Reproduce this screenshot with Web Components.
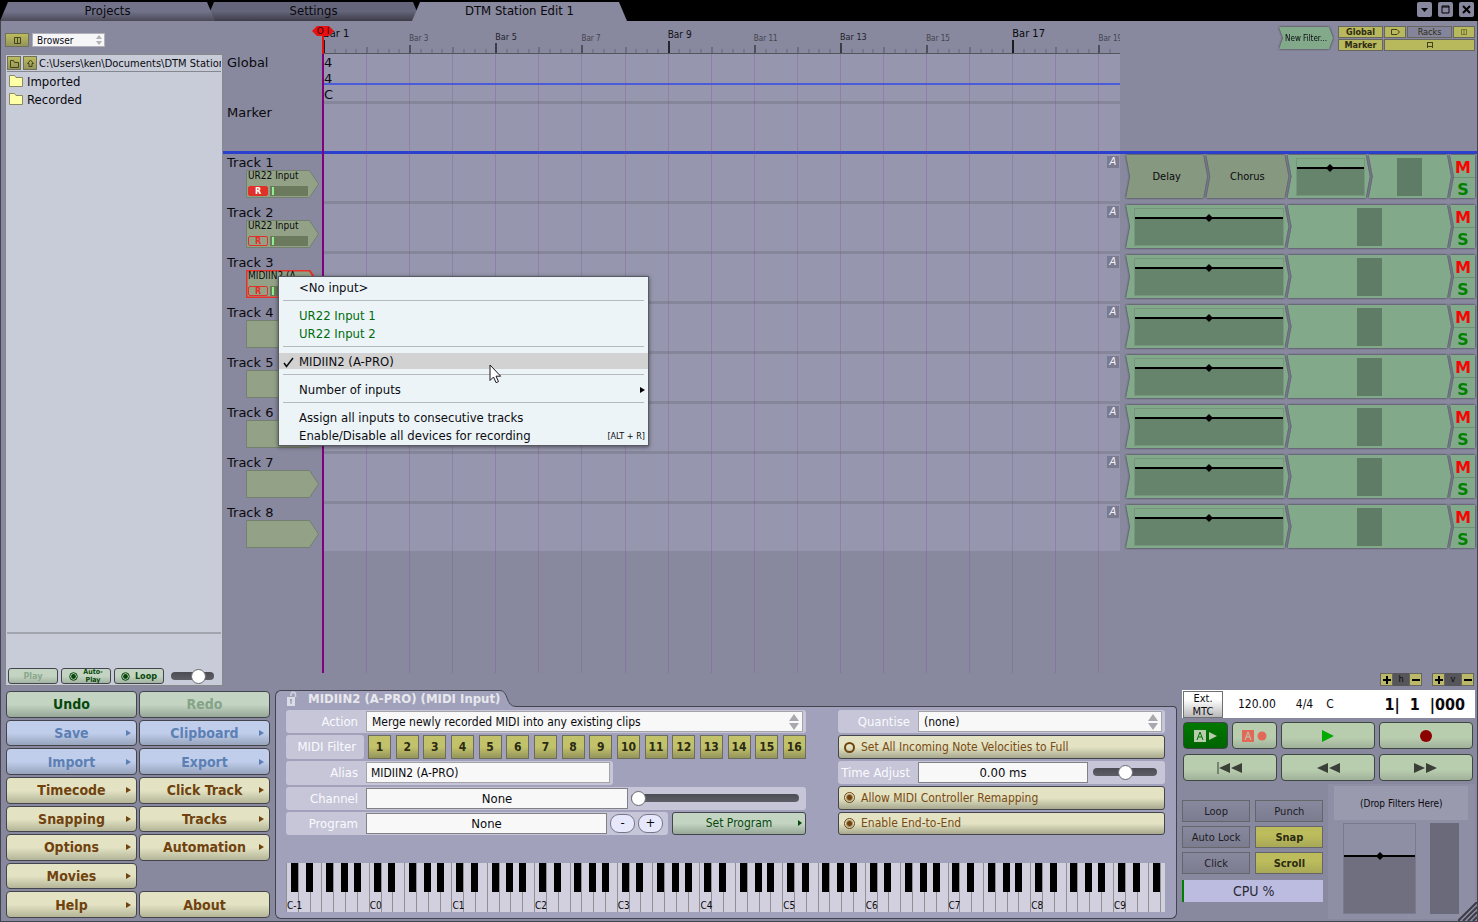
<!DOCTYPE html>
<html lang="en">
<head>
<meta charset="utf-8">
<title>DTM Station Edit 1</title>
<style>
    html, body { margin: 0; height: 100%; }
    body {
        background: #88889e;
        color: #0a0a0e;
        font-family: "DejaVu Sans Condensed", "DejaVu Sans", sans-serif;
        font-size: 13px;
        overflow: hidden;
    }
</style>
</head>
<body>
<station-app></station-app>
<script>
// rules every shadow root starts with
const base = `
    *, *::before, *::after { box-sizing: border-box; }
    :host { box-sizing: border-box; }
    :host([hidden]) { display: none; }
    button, input, select { font: inherit; color: inherit; margin: 0; padding: 0; border: 0; border-radius: 0; background: none; }
    svg { display: block; }
`

// the round-ended slider is used in four places
const sliderCss = `
    input[type=range] { appearance: none; height: 8px; border-radius: 4px; background: linear-gradient(#4c4d54, #5e5f66); }
    input[type=range]::-webkit-slider-thumb { appearance: none; width: 15px; height: 15px; border-radius: 50%; background: white; border: 1px solid #6a6a70; }
`

class BaseElement extends HTMLElement {
    connectedCallback() {
        if (this.shadowRoot) return
        this.attachShadow({mode: 'open'})
        const template = document.createElement('template')
        template.innerHTML = '<style>' + base + '</style>' + this.render()
        this.shadowRoot.appendChild(template.content.cloneNode(true))
    }
    attr(name, fallback = '') {
        return this.hasAttribute(name) ? this.getAttribute(name) : fallback
    }
}

/* ---------- whole window ---------- */

class StationApp extends BaseElement {
    render() {
        return `<style>
            :host { display: flex; flex-direction: column; height: 100vh; position: relative; }
            .frame { flex: 1; min-height: 0; display: flex; flex-direction: column; border: 1px solid #44444f; border-top: 0; }
            .main { flex: 1; min-height: 0; display: flex; }
            .bottom { display: flex; gap: 5px; padding: 4px 2px 2px 5px; }
            track-arranger, input-inspector { flex: 1; min-width: 0; }
            input-menu { position: absolute; left: 278px; top: 276px; z-index: 5; }
            .cursor { position: absolute; left: 489px; top: 364px; z-index: 6; }
            .grip { position: absolute; right: 1px; bottom: 1px; }
        </style>
        <title-tabs></title-tabs>
        <div class="frame">
            <div class="main">
                <file-browser></file-browser>
                <track-arranger></track-arranger>
            </div>
            <div class="bottom">
                <command-grid></command-grid>
                <input-inspector></input-inspector>
                <transport-panel></transport-panel>
            </div>
        </div>
        <input-menu></input-menu>
        <svg class="cursor" width="13" height="20"><path d="M1 1v15.500l3.500-3.500 2.600 5.700 2.400-1.100-2.500-5.400h4.700z" fill="#fff" stroke="#16161c"/></svg>
        <svg class="grip" width="19" height="19"><path d="M0 19L19 0M5 19L19 5M10 19L19 10M15 19L19 15" stroke="#3c3c46" stroke-width="2"/></svg>`
    }
}

class TitleTabs extends BaseElement {
    render() {
        return `<style>
            :host { display: flex; height: 21px; padding-top: 2px; background: #000; }
            nav { display: flex; flex: 1; }
            a {
                width: 215px; height: 19px; line-height: 18px; text-align: center;
                color: #08080c; text-decoration: none;
                background: linear-gradient(#72728a 50%, #4a4a58);
                clip-path: polygon(8px 0, calc(100% - 8px) 0, 100% 100%, 0 100%);
                position: relative; z-index: 1;
            }
            a + a { margin-left: -9px; z-index: 0; background: linear-gradient(#64647a 50%, #3c3c48); }
            a.current { background: #88889e; z-index: 2; }
            .window { display: flex; gap: 6px; padding-right: 4px; }
            button { width: 15px; height: 15px; border-radius: 2px; background: #88889e; display: grid; place-items: center; }
        </style>
        <nav>
            <a href="#projects">Projects</a>
            <a href="#settings">Settings</a>
            <a href="#edit" class="current">DTM Station Edit 1</a>
        </nav>
        <div class="window">
            <button aria-label="Minimise"><svg width="9" height="9"><path d="M1 3h7L4.500 7z"/></svg></button>
            <button aria-label="Maximise"><svg width="9" height="9"><path d="M1 1h7v7H1zM1 2h7" fill="none" stroke="#000"/></svg></button>
            <button aria-label="Close"><svg width="9" height="9"><path d="M1 1l7 7m0-7l-7 7" stroke="#000" stroke-width="2"/></svg></button>
        </div>`
    }
}

/* ---------- file browser ---------- */

class FileBrowser extends BaseElement {
    render() {
        const folder = '<svg width="14" height="12"><path d="M.5.5h5l1.500 2h6.500v9H.5z" fill="#ffffa8" stroke="#8a8a60"/></svg>'
        return `<style>
            ${sliderCss}
            :host { display: flex; flex-direction: column; width: 222px; padding-left: 4px; }
            .top { display: flex; gap: 3px; height: 33px; padding-top: 12px; align-items: start; }
            .olive { background: linear-gradient(#bcbc5e, #94945c); border: 1px solid #707058; display: grid; place-items: center; }
            .top .olive { width: 24px; height: 14px; }
            .select { display: grid; align-items: center; width: 73px; height: 14px; background: #f6f6f8; border: 1px solid #b0b0b8; }
            .select > * { grid-area: 1 / 1; }
            select { appearance: none; width: 100%; padding-left: 4px; font-size: 10px; }
            .select svg { justify-self: end; margin-right: 2px; pointer-events: none; }
            .panel { flex: 1; min-height: 0; display: flex; flex-direction: column; background: #c8ccd9; border: 1px solid #88888c; }
            .path { display: flex; gap: 2px; align-items: center; height: 17px; margin: 0 1px; border-bottom: 1px solid #85878e; overflow: hidden; white-space: nowrap; font-size: 11px; }
            .path .olive { flex: none; width: 14px; height: 14px; }
            ul { flex: 1; list-style: none; margin: 0; padding: 0 3px; }
            li { display: flex; align-items: center; gap: 4px; height: 18px; }
            .bar { display: flex; gap: 3px; height: 53px; margin: 0 1px; padding: 34px 1px 1px; border-top: 2px solid #a2a4ae; align-items: end; }
            .bar button { width: 50px; height: 16px; display: flex; align-items: center; justify-content: center; gap: 5px;
                border: 1px solid #44444c; border-radius: 3px; background: linear-gradient(#c4d4c2 50%, #a4b4a4);
                font-size: 9px; font-weight: bold; color: #06480c; }
            .bar button:disabled { color: #8aa88c; }
            .bar .small { font-size: 7px; line-height: 8px; }
            .bar input { width: 43px; margin: 0 0 4px 4px; }
        </style>
        <div class="top">
            <button class="olive" aria-label="Show browser"><svg width="7" height="7"><path d="M.5.5h6v6h-6zM3.500 0v7" fill="none" stroke="#44441c"/></svg></button>
            <div class="select">
                <select aria-label="Panel"><option>Browser</option></select>
                <svg width="6" height="10"><path d="M0 4l3-4 3 4zM0 6l3 4 3-4z" fill="#b0b0b4"/></svg>
            </div>
        </div>
        <div class="panel">
            <div class="path">
                <button class="olive" aria-label="Folder"><svg width="9" height="9"><path d="M.5 1.500h3l1 2h4v5h-8z" fill="none" stroke="#44441c"/></svg></button>
                <button class="olive" aria-label="Up"><svg width="9" height="9"><path d="M4.500 1l3 3.500h-1.500v3h-3v-3h-1.500z" fill="none" stroke="#44441c"/></svg></button>
                <span>C:\\Users\\ken\\Documents\\DTM Station</span>
            </div>
            <ul>
                <li>${folder}Imported</li>
                <li>${folder}Recorded</li>
            </ul>
            <div class="bar">
                <button disabled>Play</button>
                <button class="small"><svg width="9" height="9"><circle cx="4.500" cy="4.500" r="3.800" fill="none" stroke="#06480c"/><circle cx="4.500" cy="4.500" r="2.400" fill="#06480c"/></svg><span>Auto-<br>Play</span></button>
                <button><svg width="9" height="9"><circle cx="4.500" cy="4.500" r="3.800" fill="none" stroke="#06480c"/><circle cx="4.500" cy="4.500" r="2.400" fill="#06480c"/></svg>Loop</button>
                <input type="range" aria-label="Preview volume" value="72">
            </div>
        </div>`
    }
}

/* ---------- arranger ---------- */

// label column, lanes, filter racks: the same three columns on every row
const columns = 'grid-template-columns: 100px minmax(0, 1fr) 357px;'

class TrackArranger extends BaseElement {
    render() {
        const inputs = ['UR22 Input', 'UR22 Input', 'MIDIIN2 (A-']
        let tracks = ''
        for (let index = 0; index < 8; index++) {
            tracks += `<track-row name="Track ${index + 1}" input="${inputs[index] || ''}" ${index == 0 ? 'armed filters="Delay,Chorus"' : ''} ${index == 2 ? 'selected' : ''}></track-row>`
        }
        return `<style>
            :host { display: flex; flex-direction: column; }
            .sheet { flex: 1; min-height: 0; position: relative; overflow: hidden; }
            .row { display: grid; ${columns} }
            .head { height: 33px; }
            .name { padding-left: 4px; line-height: 18px; font-family: "DejaVu Sans", sans-serif; }
            .lane { background: #9696ae; height: 47px; margin-bottom: 3px; box-shadow: 0 3px #86869b; font-family: "DejaVu Sans", sans-serif; line-height: 16px; padding: 1px 0 0 1px; }
            .tempo { background: linear-gradient(#4a5cdc, #4a5cdc) 0 29px / 100% 2px no-repeat #9696ae; }
            .marker { margin-bottom: 0; box-shadow: none; }
            .split { height: 3px; background: #2c40d0; }
            .filters { grid-column: 3; display: flex; justify-content: flex-end; gap: 5px; padding: 5px 2px 0 0; }
            .new { filter: drop-shadow(0 0 1px #333); }
            .new button { width: 54px; height: 22px; margin-top: 1px; font-size: 8px; background: #82aa8a;
                clip-path: polygon(0 0, calc(100% - 4px) 0, 100% 50%, calc(100% - 4px) 100%, 0 100%, 4px 50%); }
            .toggles { display: grid; grid-template: 12px 12px / 45px 22px 45px 22px; gap: 1px; }
            .toggles button { font-size: 9px; line-height: 10px; border: 1px solid #66665e; background: #b8b85c; font-weight: bold; color: #2c2c14; display: grid; place-items: center; }
            .toggles .off { background: #84849a; font-weight: normal; }
            .toggles .wide { grid-column: span 3; }
            .zoom { display: flex; justify-content: flex-end; gap: 10px; height: 13px; padding-right: 3px; }
            .zoom div { display: grid; grid-template-columns: 13px 16px 13px; background: #55555a; font-size: 9px; text-align: center; line-height: 13px; }
            .zoom button { border: 1px solid #66665e; background: #bcb86a; display: grid; place-items: center; }
        </style>
        <div class="sheet">
            <div class="row head">
                <span></span>
                <bar-ruler></bar-ruler>
                <div class="filters">
                    <div class="new"><button>New Filter...</button></div>
                    <div class="toggles">
                        <button>Global</button>
                        <button aria-label="Inputs"><svg width="9" height="6"><path d="M.5.5h5.500l2.500 2.500-2.500 2.500h-5.500z" fill="none" stroke="#44441c"/></svg></button>
                        <button class="off">Racks</button>
                        <button aria-label="Mixer"><svg width="6" height="6"><path d="M.5.5h5v5h-5zM3 0v6" fill="none" stroke="#77773c"/></svg></button>
                        <button>Marker</button>
                        <button class="wide" aria-label="Controls"><svg width="6" height="6"><path d="M.5 0v6M5.500 0v6M1 .5h4M1 4.500h4" stroke="#44441c"/></svg></button>
                    </div>
                </div>
            </div>
            <div class="row"><span class="name">Global</span><div class="lane tempo">4<br>4<br>C</div></div>
            <div class="row"><span class="name">Marker</span><div class="lane marker"></div></div>
            <div class="split"></div>
            ${tracks}
            <bar-lines></bar-lines>
        </div>
        <div class="zoom">
            <div><button aria-label="Zoom in horizontally"><svg width="8" height="8"><path d="M0 4h8M4 0v8" stroke="#000" stroke-width="2"/></svg></button>h<button aria-label="Zoom out horizontally"><svg width="8" height="8"><path d="M0 4h8" stroke="#000" stroke-width="2"/></svg></button></div>
            <div><button aria-label="Zoom in vertically"><svg width="8" height="8"><path d="M0 4h8M4 0v8" stroke="#000" stroke-width="2"/></svg></button>v<button aria-label="Zoom out vertically"><svg width="8" height="8"><path d="M0 4h8" stroke="#000" stroke-width="2"/></svg></button></div>
        </div>`
    }
}

// 18 and a half bars are in view, so the grids count in half bars
class BarRuler extends BaseElement {
    level(bar) {
        if (bar % 16 == 1) return 'l16'
        if (bar % 8 == 1) return 'l8'
        if (bar % 4 == 1) return 'l4'
        return bar % 2 == 1 ? 'l2' : 'l1'
    }
    render() {
        let bars = ''
        for (let bar = 1; bar <= 19; bar++) {
            const beats = bar == 19 ? '<i></i><i></i>' : '<i></i><i></i><i></i><i></i>'
            bars += `<div class="bar ${this.level(bar)} ${bar == 19 ? 'half' : ''}">${beats}<span>${bar % 2 ? 'Bar ' + bar : ''}</span></div>`
        }
        return `<style>
            :host { display: grid; grid-template-columns: repeat(37, minmax(0, 1fr)); align-items: end; overflow: hidden; border-bottom: 1px solid #55555f; }
            .bar { grid-column: span 2; position: relative; display: flex; align-items: end; height: 32px; --tick: 6px; --ink: #6e6e80; }
            .half { grid-column: span 1; }
            i { flex: 1; height: 4px; border-left: 2px solid #78788c; }
            i:first-child { height: var(--tick); border-color: var(--ink); }
            span { position: absolute; left: 0; bottom: calc(var(--tick) + 1px); line-height: 10px; white-space: nowrap; font-size: 8px; color: #44444e; }
            .l2 { --tick: 8px; --ink: #50505c; }
            .l4 { --tick: 10px; --ink: #3c3c46; }
            .l8 { --tick: 12px; --ink: #26262e; }
            .l16 { --tick: 13px; --ink: #1c1c22; }
            .l4 span { font-size: 9px; color: #22222a; }
            .l8 span { font-size: 10px; color: #121218; }
            .l16 span { font-size: 11px; color: #08080c; }
        </style>${bars}`
    }
}

class BarLines extends BaseElement {
    render() {
        return `<style>
            :host { position: absolute; inset: 5px 357px 0 100px; pointer-events: none; }
            .lines { position: absolute; inset: 28px 0 0 0; display: grid; grid-template-columns: repeat(37, minmax(0, 1fr)); }
            .lines i { grid-column: span 2; border-left: 1px solid rgba(128, 70, 150, .28); }
            .lines i:last-child { grid-column: span 1; }
            .head { position: absolute; left: -1px; top: 0; bottom: 0; width: 2px; background: linear-gradient(#e81010 28px, #800080 28px); }
            .flag { position: absolute; left: -11px; top: 0; width: 22px; height: 10px; background: #e81010; color: #300; font: 9px/10px "DejaVu Sans", sans-serif; text-align: center;
                clip-path: polygon(5px 0, calc(100% - 5px) 0, 100% 50%, calc(100% - 5px) 100%, 5px 100%, 0 50%); }
        </style>
        <div class="lines">${'<i></i>'.repeat(19)}</div>
        <div class="head"></div>
        <div class="flag">O I</div>`
    }
}

class TrackRow extends BaseElement {
    render() {
        const input = this.attr('input')
        const filters = this.attr('filters').split(',').filter(name => name)
        return `<style>
            :host { display: grid; ${columns} height: 50px; }
            .name { height: 16px; padding-left: 4px; line-height: 18px; font-family: "DejaVu Sans", sans-serif; }
            .lane { background: #9696ae; height: 47px; box-shadow: 0 3px #86869b; display: flex; justify-content: flex-end; padding: 2px 1px 0; }
            .lane button { width: 12px; height: 12px; background: #7a7a90; color: #f4f4f8; font-size: 11px; line-height: 12px; font-style: italic; }
            :host([name="Track 8"]) .lane { box-shadow: none; }
            .chip { display: grid; margin-left: 23px; width: 73px; height: 28px; }
            .chip > * { grid-area: 1 / 1; }
            .chip path { fill: #93a287; stroke: #74806f; }
            :host([selected]) path { stroke: #e83028; stroke-width: 2; }
            .inside { padding: 0 11px 0 2px; font-size: 10px; line-height: 11px; white-space: nowrap; }
            .meters { display: flex; gap: 2px; margin-top: 5px; height: 10px; }
            .rec { width: 20px; height: 10px; font-size: 9px; line-height: 8px; font-weight: bold; color: #e03028; border: 1px solid #e03028; border-radius: 2px; }
            :host([armed]) .rec { background: #e03028; color: white; }
            .meter { flex: 1; background: linear-gradient(#90f090, #90f090) 2px 1px / 2px 8px no-repeat #6b7a5c; }
            .rack { display: grid; grid-template-columns: repeat(${filters.length + 2}, minmax(0, 1fr)) 24px; height: 43px; margin: 1px 2px 0 6px; filter: drop-shadow(0 0 1px #2c2c34); }
            .rack > * { clip-path: polygon(0 0, calc(100% - 4px) 0, 100% 50%, calc(100% - 4px) 100%, 0 100%, 4px 50%); background: #82a98a; }
            .rack > * + * { margin-left: -1px; }
            .filter { background: #869880; font-size: 11px; }
            .plot { padding: 3px 5px 2px 8px; }
            .fader { padding: 3px 0 2px; display: flex; justify-content: center; }
            .fader::before { content: ""; width: 25px; background: #5f7c66; }
            .rack .ms { display: grid; grid-template-rows: 22px 21px; clip-path: polygon(0 0, 100% 0, 100% 100%, 0 100%, 4px 50%); }
            .ms button { font: bold 16px/18px "DejaVu Sans", sans-serif; color: #f00; padding: 4px 0 0 1px; }
            .ms button + button { color: #008000; border-top: 1px solid #6f9077; padding-top: 3px; }
        </style>
        <div>
            <div class="name">${this.attr('name')}</div>
            <div class="chip">
                <svg width="73" height="28"><path d="M.5.5h63l9 13.500-9 13.500H.5z"/></svg>
                ${input ? `<div class="inside">${input}<div class="meters"><button class="rec">R</button><div class="meter"></div></div></div>` : ''}
            </div>
        </div>
        <div class="lane"><button>A</button></div>
        <div class="rack">
            ${filters.map(name => `<button class="filter">${name}</button>`).join('')}
            <div class="plot"><level-plot></level-plot></div>
            <div class="fader"></div>
            <div class="ms"><button>M</button><button>S</button></div>
        </div>`
    }
}

// volume line with its diamond handle
class LevelPlot extends BaseElement {
    render() {
        return `<style>
            :host { display: grid; height: 100%; grid-template-rows: var(--plot-top, 8px) 1fr; border: 1px solid var(--plot-edge, #76967d); }
            .low { background: var(--plot-fill, #66846c); border-top: 2px solid #000; }
            svg { margin: -5px auto 0; position: relative; }
        </style>
        <div></div>
        <div class="low"><svg width="6" height="8"><path d="M3 0l3 3v2l-3 3-3-3v-2z"/></svg></div>`
    }
}

/* ---------- context menu ---------- */

class InputMenu extends BaseElement {
    render() {
        return `<style>
            :host { width: 371px; padding: 2px 0 0; background: #ecf4f8; border: 1px solid #5a5a62; box-shadow: 0 1px 4px rgba(0, 0, 0, .5); }
            button { display: flex; align-items: center; width: 100%; height: 16px; margin-bottom: 2px; line-height: 16px; padding: 2px 3px 0 0; text-align: left; color: #0c0c10; }
            .tick { flex: none; width: 20px; padding-left: 4px; }
            .text { flex: 1; }
            .green { color: #006c0c; }
            .over { background: #d2d2d2; }
            kbd { font: inherit; font-size: 9px; }
            hr { height: 1px; margin: 5px 4px 6px; border: 0; background: #b4babe; }
        </style>
        <button><span class="tick"></span><span class="text">&lt;No input&gt;</span></button>
        <hr>
        <button class="green"><span class="tick"></span><span class="text">UR22 Input 1</span></button>
        <button class="green"><span class="tick"></span><span class="text">UR22 Input 2</span></button>
        <hr>
        <button class="over"><span class="tick"><svg width="11" height="11"><path d="M1 6l2.500 3.500L10 1" fill="none" stroke="#0c0c10" stroke-width="1.500"/></svg></span><span class="text">MIDIIN2 (A-PRO)</span></button>
        <hr>
        <button><span class="tick"></span><span class="text">Number of inputs</span><svg width="5" height="6"><path d="M0 0l5 3-5 3z"/></svg></button>
        <hr>
        <button><span class="tick"></span><span class="text">Assign all inputs to consecutive tracks</span></button>
        <button><span class="tick"></span><span class="text">Enable/Disable all devices for recording</span><kbd>[ALT + R]</kbd></button>`
    }
}

/* ---------- command buttons ---------- */

class CommandGrid extends BaseElement {
    render() {
        const commands = [
            ['Undo', 'green'], ['Redo', 'green dim'],
            ['Save', 'blue menu'], ['Clipboard', 'blue menu'],
            ['Import', 'blue menu'], ['Export', 'blue menu'],
            ['Timecode', 'menu'], ['Click Track', 'menu'],
            ['Snapping', 'menu'], ['Tracks', 'menu'],
            ['Options', 'menu'], ['Automation', 'menu'],
            ['Movies', 'menu'], null,
            ['Help', 'menu'], ['About', '']
        ]
        let html = ''
        for (const command of commands) {
            html += command
                ? `<button class="${command[1]}"><span>${command[0]}</span>${command[1].includes('menu') ? '<svg width="5" height="6"><path d="M0 0l5 3-5 3z" fill="currentColor"/></svg>' : ''}</button>`
                : '<div></div>'
        }
        return `<style>
            :host { display: grid; grid-template-columns: 1fr 1fr; grid-auto-rows: 1fr; gap: 2px; width: 264px; padding: 1px 0; }
            button { display: grid; grid-template-columns: 9px 1fr 9px; align-items: center; justify-items: center; padding: 0 3px; min-height: 0;
                font-size: 14px; font-weight: bold; color: #70420e; border: 1px solid #44444c; border-radius: 4px;
                background: linear-gradient(#e3e3c4 50%, #b4b498); }
            span { grid-column: 2; }
            .green { color: #04480c; background: linear-gradient(#c4d4c2 50%, #98a898); }
            .dim { color: #84a488; }
            .blue { color: #5c80b4; background: linear-gradient(#c0ceec 50%, #98a4bc); }
        </style>${html}`
    }
}

/* ---------- inspector ---------- */

class InputInspector extends BaseElement {
    render() {
        let channels = ''
        for (let index = 1; index <= 16; index++) {
            channels += `<button>${index}</button>`
        }
        return `<style>
            :host { display: flex; flex-direction: column; --line: #44444f; --fill: #a1a1bc; }
            .head { display: flex; height: 20px; }
            .tab { display: flex; align-items: center; gap: 11px; padding: 0 0 4px 11px; border: solid var(--line); border-width: 1px 0 0 1px; border-radius: 6px 0 0 0; background: var(--fill); color: #e8e8ec; font-weight: bold; }
            .edge { flex: none; }
            .rest { flex: 1; align-self: end; height: 4px; border: solid var(--line); border-width: 1px 1px 0 0; border-radius: 0 4px 0 0; background: var(--fill); }
            .body { flex: 1; padding: 0 11px 6px 10px; background: var(--fill); border: solid var(--line); border-width: 0 1px 1px; border-radius: 0 0 6px 6px; display: flex; flex-direction: column; gap: 28px; }
            .forms { display: grid; grid-template-columns: minmax(0, 520fr) minmax(0, 327fr); gap: 32px; }
            .form { display: grid; grid-auto-rows: 1fr; gap: 2px; height: 125px; }
            .line { display: flex; gap: 4px; min-width: 0; }
            .channels { flex: 1; display: flex; justify-content: space-between; }
            .channels button { width: 23px; border: 1px solid #6c6c5c; background: linear-gradient(#c2c26a 50%, #94945c); font-size: 12px; font-weight: bold; color: #2c2c14; }
            .caption { width: 78px; padding-right: 8px; border-radius: 3px; background: #c6c6d8; color: #fafafe; text-align: right; line-height: 24px; }
            .set { width: 134px; display: grid; grid-template-columns: 9px 1fr 9px; align-items: center; justify-items: center; padding: 0 1px; font-size: 12px; color: #06480c; border: 1px solid #44444c; border-radius: 3px; background: linear-gradient(#c4d4c2 50%, #98a898); }
            .set span { grid-column: 2; }
            .grow { flex: 1; }
            .alias { width: 327px; }
        </style>
        <div class="head">
            <div class="tab">
                <svg width="10" height="15"><path d="M4 5V3.500a2 2 0 0 1 4.500 0V6" fill="none" stroke="#d4d4e0" stroke-width="1.500"/><rect y="6" width="8" height="9" fill="#dcdce4"/><path d="M4 8v5M3 9h2" stroke="#8c8ca4"/></svg>
                <span>MIDIIN2 (A-PRO) (MIDI Input)</span>
            </div>
            <svg class="edge" width="16" height="20"><path d="M0 0c9 0 5 16 16 16v4H0z" fill="#a1a1bc"/><path d="M0 .5c9 0 5 16 16 16" fill="none" stroke="#44444f"/></svg>
            <div class="rest"></div>
        </div>
        <div class="body">
            <div class="forms">
                <div class="form">
                    <param-field label="Action" kind="select" value="Merge newly recorded MIDI into any existing clips"></param-field>
                    <div class="line"><div class="caption">MIDI Filter</div><div class="channels">${channels}</div></div>
                    <div class="line"><param-field class="alias" label="Alias" kind="text" value="MIDIIN2 (A-PRO)"></param-field></div>
                    <param-field label="Channel" kind="slider" value="None" at="0"></param-field>
                    <div class="line">
                        <param-field class="grow" label="Program" kind="step" value="None"></param-field>
                        <button class="set"><span>Set Program</span><svg width="4" height="6"><path d="M0 0l4 3-4 3z" fill="#06480c"/></svg></button>
                    </div>
                </div>
                <div class="form">
                    <param-field label="Quantise" kind="select" value="(none)"></param-field>
                    <option-bar>Set All Incoming Note Velocities to Full</option-bar>
                    <param-field label="Time Adjust" kind="slider" value="0.00 ms" at="50" short></param-field>
                    <option-bar checked>Allow MIDI Controller Remapping</option-bar>
                    <option-bar checked>Enable End-to-End</option-bar>
                </div>
            </div>
            <piano-keys></piano-keys>
        </div>`
    }
}

class ParamField extends BaseElement {
    control() {
        const value = this.attr('value')
        switch (this.attr('kind')) {
            case 'select':
                return `<div class="select"><select id="field"><option>${value}</option></select>
                    <svg width="10" height="16"><path d="M0 7l5-7 5 7zM0 9l5 7 5-7z" fill="#a8a8ae"/></svg></div>`
            case 'slider':
                return `<input id="field" class="box" value="${value}"><input type="range" aria-label="${this.attr('label')} slider" value="${this.attr('at')}">`
            case 'step':
                return `<input id="field" class="box" value="${value}"><button>-</button><button>+</button>`
            default:
                return `<input id="field" class="plain" value="${value}">`
        }
    }
    render() {
        return `<style>
            ${sliderCss}
            :host { display: flex; align-items: center; gap: 3px; min-width: 0; background: #c6c6d8; border-radius: 3px; padding-right: 3px; }
            label { flex: none; width: 77px; padding-right: 5px; text-align: right; color: #fafafe; white-space: nowrap; }
            .box, .plain, .select { height: 21px; flex: 1; min-width: 0; background: #f8f8f8; border: 1px solid #a4a4a8; }
            .box { border-color: #808086; text-align: center; }
            .plain { padding-left: 4px; font-size: 12px; }
            .select { display: grid; align-items: center; }
            .select > * { grid-area: 1 / 1; }
            select { appearance: none; width: 100%; height: 100%; padding-left: 5px; font-size: 12px; }
            .select svg { justify-self: end; margin-right: 3px; pointer-events: none; }
            input[type=range] { width: 168px; margin-right: 4px; }
            :host([short]) input[type=range] { width: 64px; margin: 0 5px 0 2px; }
            button { width: 25px; height: 19px; border: 1px solid #77778c; border-radius: 9px; background: #e8e8fc; line-height: 16px; }
            button:last-child { margin-right: 2px; }
        </style>
        <label for="field">${this.attr('label')}</label>${this.control()}`
    }
}

class OptionBar extends BaseElement {
    render() {
        return `<style>
            :host { display: block; min-width: 0; }
            label { display: flex; align-items: center; gap: 6px; height: 100%; padding-left: 5px; font-size: 12px; color: #7a4a10; border: 1px solid #44444c; border-radius: 3px; background: linear-gradient(#e3e3c4 50%, #a8a88e); }
            input { appearance: none; width: 11px; height: 11px; border: 1px solid #70420e; border-radius: 50%; outline: 1px solid transparent; }
            input:not(:checked) { border-width: 2px; }
            input:checked { background: radial-gradient(#70420e 2px, transparent 4px); }
        </style>
        <label><input type="checkbox" ${this.hasAttribute('checked') ? 'checked' : ''}><slot></slot></label>`
    }
}

// 75 white keys, C-1 up to G9; the last one runs off the end
class PianoKeys extends BaseElement {
    render() {
        const sharps = {C: 7, D: 4, F: 7, G: 4, A: 3}
        let keys = ''
        for (let index = 0; index < 75; index++) {
            const note = 'CDEFGAB'[index % 7]
            const octave = Math.floor(index / 7) - 1
            const black = sharps[note] && index < 74 ? `<b style="left: calc(100% - ${sharps[note]}px)"></b>` : ''
            keys += `<div>${black}${note == 'C' ? `<span>C${octave}</span>` : ''}</div>`
        }
        return `<style>
            :host { display: flex; height: 49px; overflow: hidden; background: #d2d0de; }
            div { flex: 0 0 1.345%; min-width: 0; position: relative; display: flex; align-items: end; border-left: 1px solid #909094; }
            b { position: absolute; top: 0; z-index: 1; width: 7px; height: 29px; background: #000; }
            span { position: relative; z-index: 2; font-size: 10px; line-height: 12px; white-space: nowrap; }
        </style>${keys}`
    }
}

/* ---------- transport ---------- */

class TransportPanel extends BaseElement {
    render() {
        return `<style>
            :host { display: flex; flex-direction: column; width: 293px; }
            .display { display: flex; align-items: center; height: 28px; background: #fff; font-size: 12px; padding: 0 10px 0 1px; }
            .display button { width: 40px; height: 27px; font-size: 11px; line-height: 13px; border: 1px solid #707074; background: linear-gradient(#fff 30%, #b8b8b8); }
            .tempo { margin-left: 15px; }
            .sig { margin-left: 20px; }
            .key { margin-left: 13px; flex: 1; }
            .pos { display: flex; gap: 10px; font-size: 16px; font-weight: bold; white-space: nowrap; }
            .buttons { display: grid; grid-template-columns: repeat(6, minmax(0, 1fr)); grid-auto-rows: 27px; gap: 5px 4px; padding: 4px 2px 0 1px; }
            .buttons button { display: flex; align-items: center; justify-content: center; border: 1px solid #3e4840; border-radius: 4px; background: linear-gradient(#b8ccae 60%, #a0b29a); }
            .buttons .on { background: linear-gradient(#007800, #006400); }
            .buttons .double { grid-column: span 2; }
            .lower { flex: 1; display: flex; gap: 5px; justify-content: space-between; padding-top: 3px; }
            .left { display: grid; grid-template-columns: 1fr 1fr; grid-auto-rows: 22px; gap: 4px 5px; width: 142px; padding-top: 16px; align-content: start; }
            .left button { border: 1px solid #66666a; background: linear-gradient(#88889e, #7c7c90); font-size: 11px; color: #1c1c24; }
            .left .on { font-weight: bold; color: #2c2c10; background: linear-gradient(#bcbc5c 40%, #a8a858); }
            .cpu { grid-column: span 2; margin-top: 2px; height: 22px; border-left: 2px solid #008000; background: #bcbce0; font-size: 14px; line-height: 22px; text-align: center; color: #2a2a34; }
            .master { width: 147px; padding: 2px 7px 5px 6px; background: #8e8ea4; display: flex; flex-direction: column; gap: 3px; }
            .drop { height: 34px; background: #9a9aae; font-size: 10px; line-height: 35px; text-align: center; }
            .levels { flex: 1; display: flex; gap: 14px; padding: 0 9px; --plot-top: 31px; --plot-fill: #6f6f80; --plot-edge: #7a7a8e; }
            .levels level-plot { flex: 1; height: auto; }
            .fader { width: 29px; background: #6a6a7a; }
        </style>
        <div class="display">
            <button>Ext.<br>MTC</button>
            <span class="tempo">120.00</span><span class="sig">4/4</span><span class="key">C</span>
            <div class="pos"><span>1|</span><span>1</span><span>|000</span></div>
        </div>
        <div class="buttons">
            <button class="on" aria-label="Automation read"><svg width="24" height="12"><rect width="12" height="12" fill="#b8ccae"/><path d="M3 10l3-8 3 8M4 7h4" fill="none" stroke="#007000"/><path d="M15 2l8 4-8 4z" fill="#b8ccae"/></svg></button>
            <button aria-label="Automation write"><svg width="26" height="12"><rect width="12" height="12" fill="#e2685a"/><path d="M3 10l3-8 3 8M4 7h4" fill="none" stroke="#b8ccae"/><circle cx="20" cy="6" r="4.500" fill="#e2685a"/></svg></button>
            <button class="double" aria-label="Play"><svg width="12" height="12"><path d="M0 0l12 6-12 6z" fill="#00aa00"/></svg></button>
            <button class="double" aria-label="Record"><svg width="12" height="12"><circle cx="6" cy="6" r="6" fill="#8c0000"/></svg></button>
            <button class="double" aria-label="Return to start"><svg width="26" height="12"><path d="M.5 0h1v12h-1zM13 1v10L2 6zM25 1v10L14 6z" fill="#3a4038"/></svg></button>
            <button class="double" aria-label="Rewind"><svg width="24" height="12"><path d="M12 1v10L1 6zM24 1v10L13 6z" fill="#3a4038"/></svg></button>
            <button class="double" aria-label="Fast forward"><svg width="24" height="12"><path d="M0 1v10l11-5zM12 1v10l11-5z" fill="#3a4038"/></svg></button>
        </div>
        <div class="lower">
            <div class="left">
                <button>Loop</button><button>Punch</button>
                <button>Auto Lock</button><button class="on">Snap</button>
                <button>Click</button><button class="on">Scroll</button>
                <div class="cpu">CPU %</div>
            </div>
            <div class="master">
                <div class="drop">(Drop Filters Here)</div>
                <div class="levels"><level-plot></level-plot><div class="fader"></div></div>
            </div>
        </div>`
    }
}

customElements.define('level-plot', LevelPlot)
customElements.define('title-tabs', TitleTabs)
customElements.define('file-browser', FileBrowser)
customElements.define('bar-ruler', BarRuler)
customElements.define('bar-lines', BarLines)
customElements.define('track-row', TrackRow)
customElements.define('track-arranger', TrackArranger)
customElements.define('input-menu', InputMenu)
customElements.define('command-grid', CommandGrid)
customElements.define('param-field', ParamField)
customElements.define('option-bar', OptionBar)
customElements.define('piano-keys', PianoKeys)
customElements.define('input-inspector', InputInspector)
customElements.define('transport-panel', TransportPanel)
customElements.define('station-app', StationApp)
</script>
</body>
</html>
